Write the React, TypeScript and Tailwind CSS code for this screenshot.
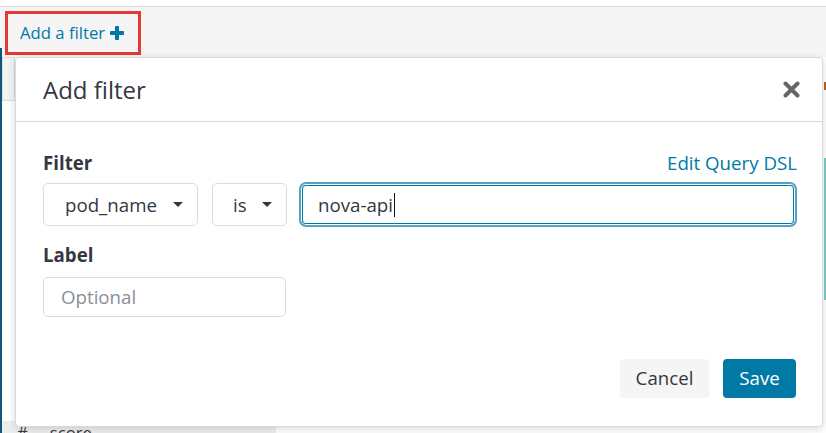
import React from "react";

const font = { fontFamily: '"Open Sans", "Liberation Sans", sans-serif' };

function Caret() {
  return (
    <svg width="10" height="5" viewBox="0 0 10 5" className="shrink-0">
      <path d="M0 0h10L5 5z" fill="#343741" />
    </svg>
  );
}

function PlusIcon() {
  return (
    <svg width="14" height="14" viewBox="0 0 14 14">
      <rect x="5" y="0" width="4" height="14" rx="0.8" fill="#0079a5" />
      <rect x="0" y="5" width="14" height="4" rx="0.8" fill="#0079a5" />
    </svg>
  );
}

function CloseIcon() {
  return (
    <svg width="17" height="17" viewBox="0 0 17 17">
      <path d="M2.5 2.5l12 12M14.5 2.5l-12 12" stroke="#666" strokeWidth="4" strokeLinecap="round" />
    </svg>
  );
}

export default function App() {
  return (
    <div className="relative w-[826px] h-[433px] overflow-hidden bg-white text-[#343741]" style={font}>
      {/* top filter bar */}
      <div className="h-[6px] bg-white" />
      <div className="h-[51px] border-t border-[#d9d9d9] bg-[#f5f5f5] pl-[5px] pt-[4px]">
        <button className="flex h-[44px] w-[136px] items-center gap-[5px] border-[3px] border-[#e53935] pl-[12px] text-[16.7px] text-[#0079a5]">
          Add a filter
          <PlusIcon />
        </button>
      </div>

      {/* page behind the popover */}
      <div className="flex h-[376px] flex-col justify-between">
        <div className="ml-[2px] h-[44px] w-[13px] border border-[#dcdcdc] bg-[#f3f3f3]" />
        <div className="mb-[-12px] flex h-[24px] w-[276px] items-center gap-[22px] bg-[#eeeeee] pl-[17px] text-[16.7px]">
          <span>#</span>
          <span>score</span>
        </div>
      </div>
      <div className="absolute left-0 top-[48px] bottom-0 w-[2px] bg-[#0b5a79]" />
      <div className="absolute right-0 top-[158px] h-[142px] w-[2px] bg-[#7accc4]" />
      <div className="absolute right-0 top-[82px] h-[8px] w-[2px] bg-[#b5651d]" />

      {/* Add filter popover */}
      <div className="absolute left-[15px] top-[57px] flex h-[370px] w-[808px] flex-col rounded-[4px] border border-[#d9d9d9] bg-white shadow-[0_2px_8px_rgba(0,0,0,0.15)]">
        <div className="flex h-[64px] shrink-0 items-center justify-between border-b border-[#d9d9d9] pl-[27px] pr-[22px]">
          <h2 className="text-[24px]">Add filter</h2>
          <CloseIcon />
        </div>

        <div className="pl-[27px] pr-[25px] pt-[27px]">
          <div className="flex items-center justify-between">
            <span className="text-[18.7px] font-bold">Filter</span>
            <span className="text-[18.7px] text-[#0079a5]">Edit Query DSL</span>
          </div>

          <div className="mt-[5px] flex items-center">
            <div className="flex h-[43px] w-[155px] items-center justify-between rounded-[5px] border border-[#dcdcdc] pl-[21px] pr-[14px] text-[18.7px]">
              <span>pod_name</span>
              <Caret />
            </div>
            <div className="ml-[14px] flex h-[43px] w-[75px] items-center justify-between rounded-[5px] border border-[#dcdcdc] pl-[20px] pr-[14px] text-[18.7px]">
              <span>is</span>
              <Caret />
            </div>
            <div className="ml-[12px] flex h-[45px] flex-1 items-center rounded-[7px] border-2 border-[#54a2c4] pl-[17px] text-[18.7px] shadow-[inset_0_0_0_1px_#fff,inset_0_0_0_2px_#0079a5]">
              <span>nova-api</span>
              <span className="ml-[1px] h-[24px] w-[1px] bg-[#111]" />
            </div>
          </div>

          <div className="mt-[14px] text-[18.7px] font-bold">Label</div>
          <div className="mt-[8px] flex h-[40px] w-[243px] items-center rounded-[5px] border border-[#dcdcdc] pl-[17px] text-[18.7px] text-[#8a8f99]">
            Optional
          </div>
        </div>

        <div className="mt-auto flex justify-end gap-[14px] pb-[28px] pr-[26px]">
          <button className="h-[39px] w-[89px] rounded-[4px] bg-[#f5f5f5] text-[18.7px] text-[#343741]">Cancel</button>
          <button className="h-[39px] w-[73px] rounded-[4px] bg-[#0079a5] text-[18.7px] text-white">Save</button>
        </div>
      </div>
    </div>
  );
}
